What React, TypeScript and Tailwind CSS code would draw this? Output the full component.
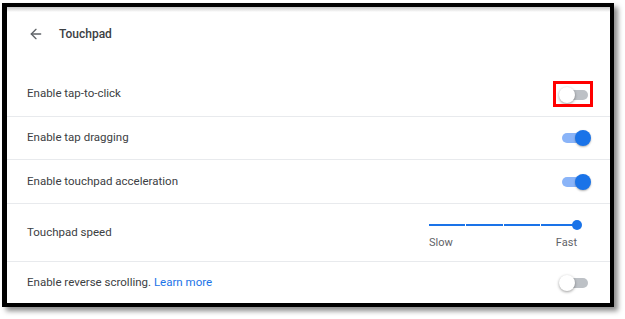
import React from "react";
import { ArrowLeft } from "lucide-react";

function Toggle({ on }: { on: boolean }) {
  return (
    <div className="relative w-[32px] h-[16px]">
      <div
        className={`absolute left-[3px] right-[3px] top-[3px] h-[10px] rounded-full ${
          on ? "bg-[#8ab4f8]" : "bg-[#bdc1c6]"
        }`}
      />
      <div
        className={`absolute top-0 w-[16px] h-[16px] rounded-full ${
          on
            ? "right-0 bg-[#1a73e8] shadow-[0_1px_2px_rgba(0,0,0,0.3)]"
            : "left-0 bg-white shadow-[0_1px_3px_rgba(0,0,0,0.4)]"
        }`}
      />
    </div>
  );
}

function Row({
  children,
  right,
  height,
  divider = true,
}: {
  children: React.ReactNode;
  right: React.ReactNode;
  height: string;
  divider?: boolean;
}) {
  return (
    <div className={`flex items-center justify-between pl-[20px] ${height} ${divider ? "border-b border-[#e8eaed]" : ""}`}>
      <span className="text-[11.5px] text-[#3c4043]">{children}</span>
      {right}
    </div>
  );
}

function SpeedSlider() {
  return (
    <div className="mr-[33px] mt-[5px] w-[148px] flex flex-col">
      <div className="relative h-[10px] flex items-center gap-[1px]">
        <div className="flex-1 h-[2px] bg-[#1a73e8]" />
        <div className="flex-1 h-[2px] bg-[#1a73e8]" />
        <div className="flex-1 h-[2px] bg-[#1a73e8]" />
        <div className="flex-1 h-[2px] bg-[#1a73e8]" />
        <div className="absolute -right-[5px] top-0 w-[10px] h-[10px] rounded-full bg-[#1a73e8]" />
      </div>
      <div className="mt-[6px] h-[14px] flex justify-between items-center text-[11px] text-[#5f6368]">
        <span>Slow</span>
        <span>Fast</span>
      </div>
    </div>
  );
}

export default function App() {
  return (
    <div className="w-[625px] h-[319px] bg-white pt-[3px] pl-[2px] font-['Roboto',sans-serif]">
      <div className="w-[612px] h-[304px] border-black border-t-[4px] border-b-[4px] border-l-[5px] border-r-[4px] bg-white shadow-[4px_4px_5px_rgba(0,0,0,0.45)] overflow-hidden">
        <div className="h-[5px] bg-gradient-to-b from-[#c8c8c8] to-white" />

        {/* Header */}
        <div className="h-[44px] flex items-center pl-[21px]">
          <ArrowLeft className="w-[16px] h-[16px] text-[#5f6368]" strokeWidth={2} />
          <span className="ml-[15px] text-[12px] font-medium text-[#3c4043]">Touchpad</span>
        </div>

        <div className="pt-[16px]">
          <Row
            height="h-[45px]"
            right={
              <div className="relative mr-[19px] mt-[2px]">
                <Toggle on={false} />
                <div className="absolute -left-[6px] -top-[6px] w-[40px] h-[26px] border-[3px] border-[#ff0000]" />
              </div>
            }
          >
            Enable tap-to-click
          </Row>
          <Row height="h-[43px]" right={<div className="mr-[19px]"><Toggle on /></div>}>
            Enable tap dragging
          </Row>
          <Row height="h-[44px]" right={<div className="mr-[19px]"><Toggle on /></div>}>
            Enable touchpad acceleration
          </Row>
          <Row height="h-[58px]" right={<SpeedSlider />}>
            Touchpad speed
          </Row>
          <Row height="h-[41px]" divider={false} right={<div className="mr-[19px]"><Toggle on={false} /></div>}>
            Enable reverse scrolling. <span className="text-[#1a73e8]">Learn more</span>
          </Row>
        </div>
      </div>
    </div>
  );
}
